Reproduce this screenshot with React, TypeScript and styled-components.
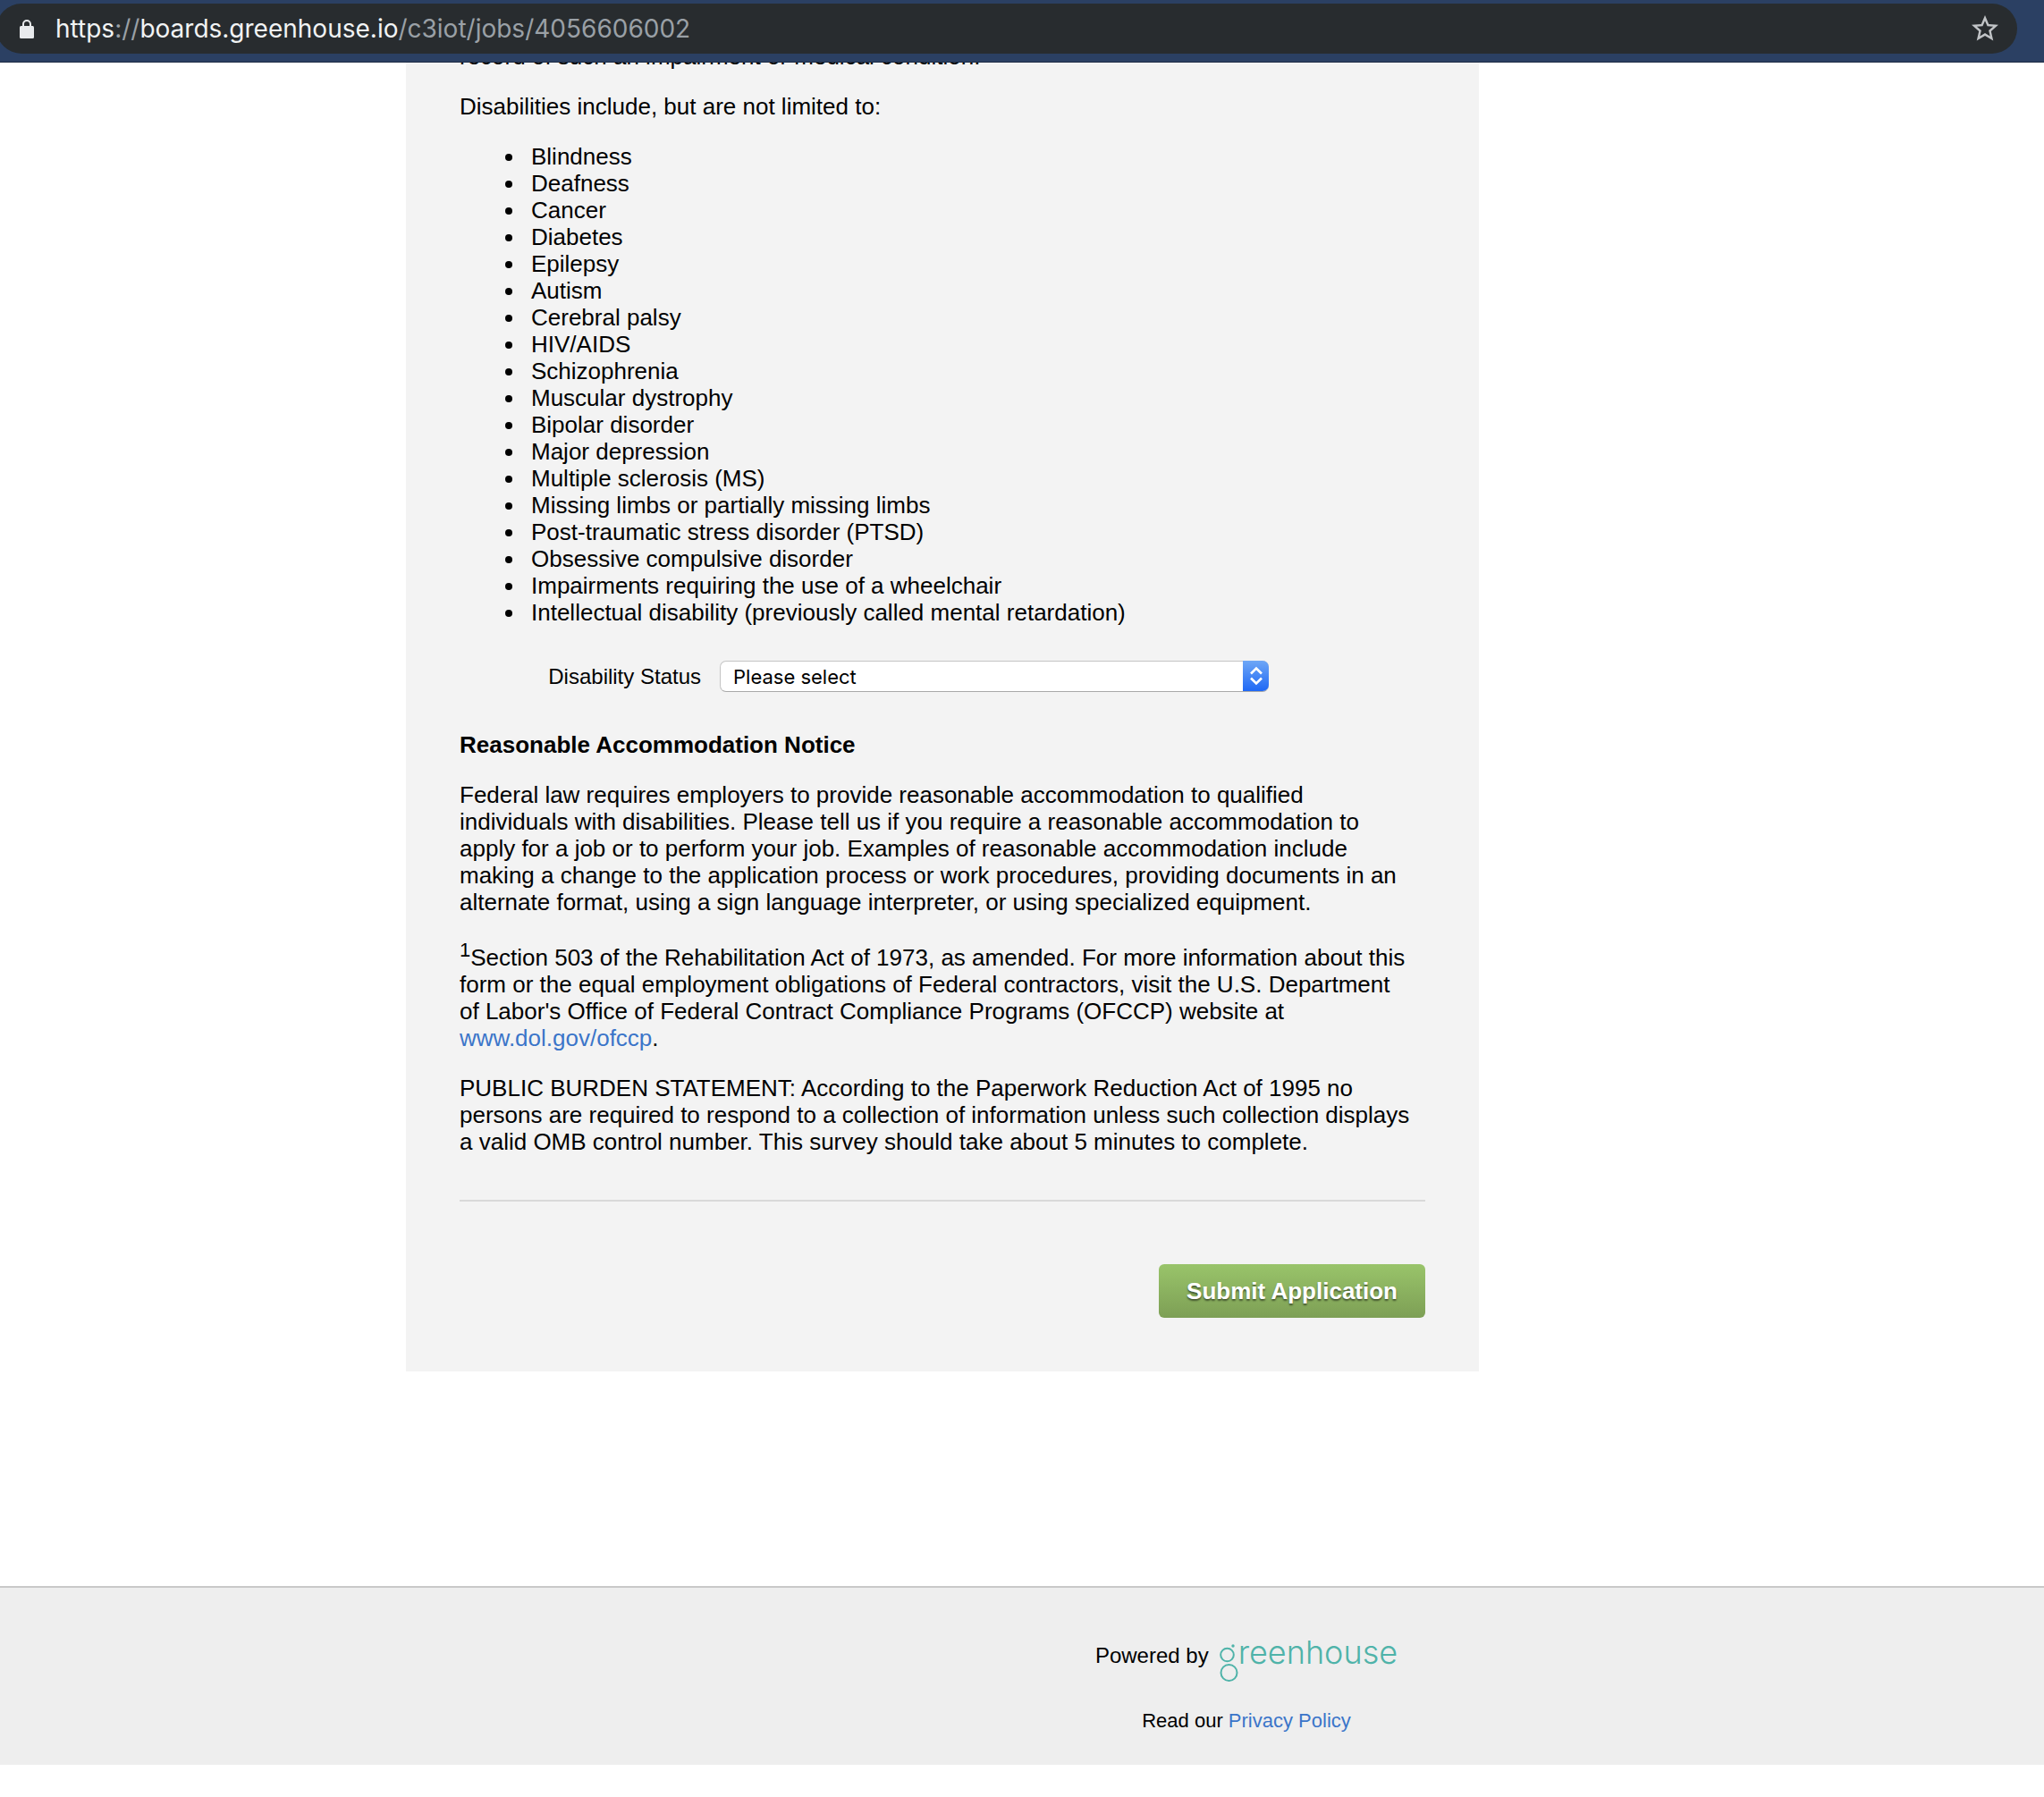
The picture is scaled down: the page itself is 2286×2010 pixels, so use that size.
import React from "react";
import styled, { createGlobalStyle } from "styled-components";

const GlobalStyle = createGlobalStyle`
  * { box-sizing: border-box; }
  body {
    margin: 0;
    background: #fff;
    color: #000;
    font: 26px/30px "Liberation Sans", Arial, Helvetica, sans-serif;
  }
`;

const Link = styled.a`
  color: #3b75c9;
  text-decoration: none;
`;

const BrowserBar = styled.header`
  position: sticky;
  top: 0;
  z-index: 1;
  height: 70px;
  padding: 4px 30px 9px 0;
  background: #2b4063;
  border-bottom: 1px solid #1d2b43;
`;

const AddressBar = styled.div`
  display: flex;
  align-items: center;
  height: 56px;
  margin-left: -4px;
  padding: 0 18px;
  border-radius: 28px;
  background: #282c2f;
`;

const Url = styled.div`
  flex: 1;
  margin-left: 16px;
  color: #f1f3f4;
  font: 28px/34px Inter, "Liberation Sans", sans-serif;
`;

const UrlDim = styled.span`
  color: #9aa0a6;
`;

const StarButton = styled.button`
  display: flex;
  padding: 0;
  border: 0;
  background: none;
`;

const Page = styled.div`
  padding-right: 178px;
`;

const Card = styled.main`
  max-width: 1200px;
  margin: -22px auto 240px;
  padding: 0 60px 60px;
  background: #f3f3f3;
`;

const Paragraph = styled.p`
  margin: 0 0 26px;
  padding-right: 14px;
`;

const FootnoteMark = styled.sup`
  font-size: 22px;
  line-height: 26px;
`;

const List = styled.ul`
  margin: 0 0 26px;
  padding-left: 74px;
`;

const ListItem = styled.li`
  padding-left: 6px;
`;

const Field = styled.div`
  display: grid;
  grid-template-columns: 270px 614px;
  column-gap: 21px;
  align-items: center;
  margin: 39px 0 44px;
`;

const FieldLabel = styled.label`
  font-size: 24px;
  text-align: right;
`;

const SelectBox = styled.div`
  position: relative;
  height: 35px;
`;

const Select = styled.select`
  width: 100%;
  height: 35px;
  padding: 0 40px 0 14px;
  appearance: none;
  border: 1px solid #c4c4c4;
  border-bottom-color: #a8a8a8;
  border-radius: 7px;
  background: #fff;
  color: #000;
  font: 22px/30px Inter, "Liberation Sans", sans-serif;
`;

const Stepper = styled.span`
  position: absolute;
  top: 0;
  right: 0;
  display: flex;
  align-items: center;
  justify-content: center;
  width: 29px;
  height: 34px;
  border-radius: 0 7px 7px 0;
  background: linear-gradient(#6ea7f6, #1f68f5);
  pointer-events: none;
`;

const Heading = styled.h3`
  margin: 0 0 26px;
  font-size: 26px;
  line-height: 30px;
`;

const Actions = styled.div`
  display: flex;
  justify-content: flex-end;
  margin-top: 50px;
  padding-top: 70px;
  border-top: 2px solid #d9d9d9;
`;

const SubmitButton = styled.button`
  height: 60px;
  padding: 0 31px;
  border: 0;
  border-radius: 6px;
  background: linear-gradient(#99c46a, #7d9f55);
  color: #fff;
  font: bold 26px/30px "Liberation Sans", Arial, sans-serif;
  text-shadow: 0 2px 2px rgba(0, 0, 0, 0.5);
`;

const Footer = styled.footer`
  padding: 59px 178px 36px 0;
  border-top: 2px solid #c9c9c9;
  background: #eee;
`;

const FooterInner = styled.div`
  display: flex;
  justify-content: flex-end;
  max-width: 1200px;
  margin: 0 auto;
`;

const Credits = styled.div`
  display: flex;
  flex-direction: column;
  align-items: center;
  gap: 31px;
  width: 520px;
`;

const PoweredBy = styled.div`
  display: flex;
  gap: 12px;
  font-size: 24px;
  line-height: 34px;
`;

const Logo = styled.a`
  display: flex;
  align-items: flex-start;
  color: #4fb3a9;
  font: 300 36px/26px Inter, Lato, sans-serif;
  text-decoration: none;
`;

const Policy = styled.p`
  margin: 0;
  font-size: 22px;
  line-height: 26px;
`;

const conditions = [
  "Blindness",
  "Deafness",
  "Cancer",
  "Diabetes",
  "Epilepsy",
  "Autism",
  "Cerebral palsy",
  "HIV/AIDS",
  "Schizophrenia",
  "Muscular dystrophy",
  "Bipolar disorder",
  "Major depression",
  "Multiple sclerosis (MS)",
  "Missing limbs or partially missing limbs",
  "Post-traumatic stress disorder (PTSD)",
  "Obsessive compulsive disorder",
  "Impairments requiring the use of a wheelchair",
  "Intellectual disability (previously called mental retardation)",
];

const LockIcon = () => (
  <svg width="32" height="32" viewBox="0 0 32 32" aria-hidden="true">
    <rect x="8" y="13" width="16" height="14" rx="1.5" fill="#e8eaed" />
    <path d="M12 14V11a4 4 0 0 1 8 0v3" fill="none" stroke="#e8eaed" strokeWidth="2" />
  </svg>
);

const StarIcon = () => (
  <svg width="36" height="36" viewBox="0 0 24 24" aria-hidden="true">
    <path
      fill="#c1c4c7"
      d="M22 9.24l-7.19-.62L12 2 9.19 8.63 2 9.24l5.46 4.73L5.82 21 12 17.27 18.18 21l-1.63-7.03L22 9.24zM12 15.4l-3.76 2.27 1-4.28-3.32-2.88 4.38-.38L12 6.1l1.71 4.04 4.38.38-3.32 2.88 1 4.28L12 15.4z"
    />
  </svg>
);

const GreenhouseMark = () => (
  <svg width="21" height="46" viewBox="0 0 21 46" fill="none" stroke="#4fb3a9" strokeWidth="2" aria-hidden="true">
    <circle cx="8.5" cy="16" r="7.3" />
    <circle cx="10.5" cy="36" r="9" />
    <circle cx="15" cy="6" r="1.7" fill="#4fb3a9" stroke="none" />
  </svg>
);

export default function App() {
  return (
    <>
      <GlobalStyle />
      <BrowserBar>
        <AddressBar>
          <LockIcon />
          <Url>
            https<UrlDim>://</UrlDim>boards.greenhouse.io<UrlDim>/c3iot/jobs/4056606002</UrlDim>
          </Url>
          <StarButton aria-label="Bookmark this page">
            <StarIcon />
          </StarButton>
        </AddressBar>
      </BrowserBar>
      <Page>
        <Card>
          <Paragraph>record of such an impairment or medical condition.</Paragraph>
          <Paragraph>Disabilities include, but are not limited to:</Paragraph>
          <List>
            {conditions.map((name) => (
              <ListItem key={name}>{name}</ListItem>
            ))}
          </List>
          <Field>
            <FieldLabel htmlFor="disability-status">Disability Status</FieldLabel>
            <SelectBox>
              <Select id="disability-status">
                <option>Please select</option>
              </Select>
              <Stepper>
                <svg width="16" height="22" viewBox="0 0 16 22" fill="none" stroke="#fff" strokeWidth="2.6" aria-hidden="true">
                  <path d="M2 8.500 8 2.500l6 6M2 13.500l6 6 6-6" />
                </svg>
              </Stepper>
            </SelectBox>
          </Field>
          <Heading>Reasonable Accommodation Notice</Heading>
          <Paragraph>
            Federal law requires employers to provide reasonable accommodation to qualified individuals with
            disabilities. Please tell us if you require a reasonable accommodation to apply for a job or to perform
            your job. Examples of reasonable accommodation include making a change to the application process or work
            procedures, providing documents in an alternate format, using a sign language interpreter, or using
            specialized equipment.
          </Paragraph>
          <Paragraph>
            <FootnoteMark>1</FootnoteMark>Section 503 of the Rehabilitation Act of 1973, as amended. For more
            information about this form or the equal employment obligations of Federal contractors, visit the U.S.
            Department of Labor's Office of Federal Contract Compliance Programs (OFCCP) website at{" "}
            <Link href="#ofccp">www.dol.gov/ofccp</Link>.
          </Paragraph>
          <Paragraph>
            PUBLIC BURDEN STATEMENT: According to the Paperwork Reduction Act of 1995 no persons are required to
            respond to a collection of information unless such collection displays a valid OMB control number. This
            survey should take about 5 minutes to complete.
          </Paragraph>
          <Actions>
            <SubmitButton type="submit">Submit Application</SubmitButton>
          </Actions>
        </Card>
      </Page>
      <Footer>
        <FooterInner>
          <Credits>
            <PoweredBy>
              <span>Powered by</span>
              <Logo href="#greenhouse" aria-label="greenhouse">
                <GreenhouseMark />
                reenhouse
              </Logo>
            </PoweredBy>
            <Policy>
              Read our <Link href="#privacy">Privacy Policy</Link>
            </Policy>
          </Credits>
        </FooterInner>
      </Footer>
    </>
  );
}
